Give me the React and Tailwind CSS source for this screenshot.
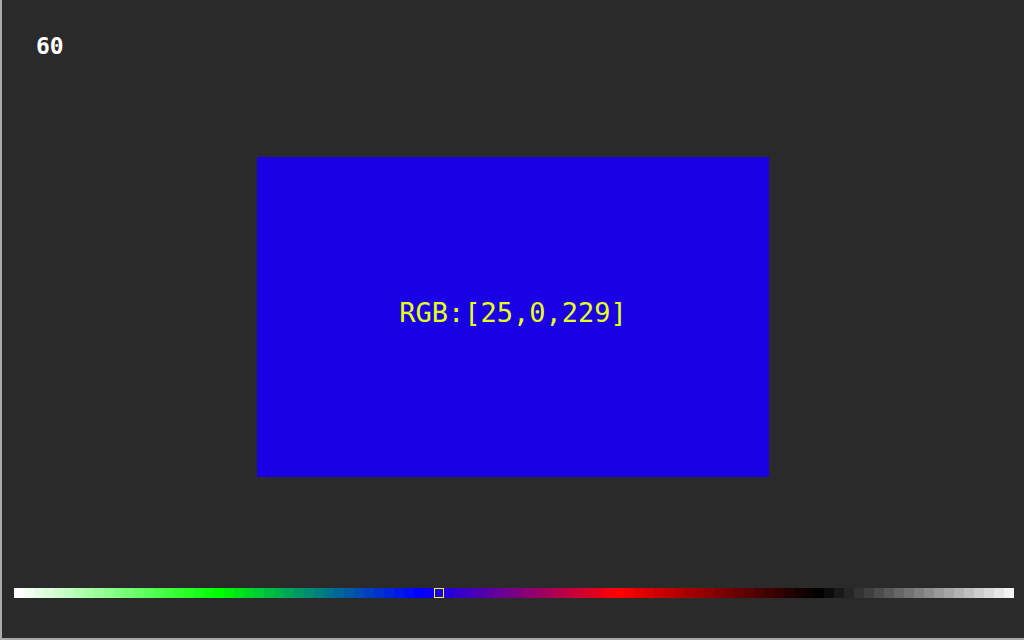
import React from 'react';

// 100 swatches, 10px each: white → green → blue → red → black → white
function swatch(k) {
  const seg = Math.floor(k / 20);
  const t = (k % 20) / 20;
  const v = (x) => Math.floor(x * 255);
  switch (seg) {
    case 0: return [v(1 - t), 255, v(1 - t)];
    case 1: return [0, v(1 - t), v(t)];
    case 2: return [v(t), 0, v(1 - t)];
    case 3: return [v(1 - t), 0, 0];
    default: return [v(t), v(t), v(t)];
  }
}

const SELECTED = 42;
const [r, g, b] = swatch(SELECTED);
const inverse = [255 - r, 255 - g, 255 - b];
const rgb = (c) => `rgb(${c[0]},${c[1]},${c[2]})`;

export default function App() {
  return (
    <div className="w-[1024px] h-[640px] bg-[#a9a9a9] pl-[2px] pb-[2px]">
      <div className="w-[1022px] h-[638px] bg-[#2a2a2a] flex flex-col font-['DejaVu_Sans_Mono','Liberation_Mono',monospace]">

        {/* fps counter */}
        <div className="pt-[36px] pl-[34px] text-[23px] leading-[20px] font-semibold text-white">60</div>

        {/* colour preview */}
        <div
          className="mt-[101px] mx-auto w-[512px] h-[320px] flex items-center justify-center"
          style={{ backgroundColor: rgb([r, g, b]) }}
        >
          <span className="text-[27px] leading-[30px] -mt-[8px]" style={{ color: rgb(inverse) }}>
            RGB:[{r},{g},{b}]
          </span>
        </div>

        {/* palette */}
        <div className="mt-[111px] ml-[12px] w-[1000px] h-[10px] flex">
          {Array.from({ length: 100 }, (_, k) => (
            <span
              key={k}
              className={`w-[10px] h-[10px] shrink-0 ${k === SELECTED ? 'border border-[#f2ff08]' : ''}`}
              style={{ backgroundColor: rgb(swatch(k)) }}
            />
          ))}
        </div>

      </div>
    </div>
  );
}
